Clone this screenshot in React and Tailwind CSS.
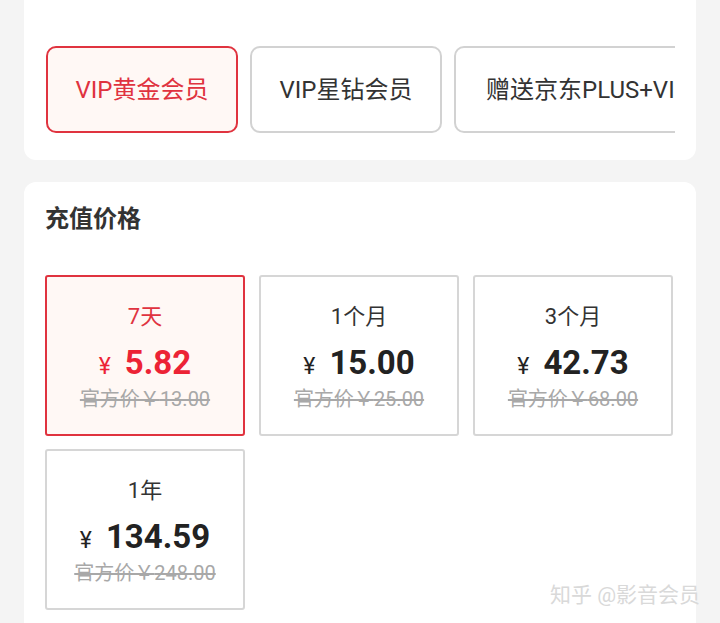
import React from "react";

const tabs = [
  { name: "VIP黄金会员", active: true },
  { name: "VIP星钻会员", active: false },
  { name: "赠送京东PLUS+VIP年卡", active: false },
];

const plans = [
  { label: "7天", price: "5.82", official: "13.00", active: true },
  { label: "1个月", price: "15.00", official: "25.00", active: false },
  { label: "3个月", price: "42.73", official: "68.00", active: false },
  { label: "1年", price: "134.59", official: "248.00", active: false },
];

export default function App() {
  return (
    <div
      className="relative h-[623px] w-[720px] overflow-hidden bg-[#f4f4f4]"
      style={{ fontFamily: "Roboto, 'Noto Sans CJK SC', sans-serif" }}
    >
      {/* 充值类型 */}
      <div className="mx-[24px] -mt-[25px] rounded-[12px] bg-white px-[22px] pb-[27px]">
        <h2 className="text-[24px] font-bold leading-[28px] text-[#333]">充值类型</h2>
        <div className="mr-[-1px] mt-[43px] flex gap-[12px] overflow-hidden">
          {tabs.map((t, i) => (
            <div
              key={t.name}
              className={`flex h-[87px] shrink-0 items-center justify-center whitespace-nowrap rounded-[10px] border-2 px-[30px] text-[24px] ${
                i < 2 ? "w-[192px]" : ""
              } ${
                t.active
                  ? "border-[#e0333f] bg-[#fff8f5] text-[#e0333f]"
                  : "border-[#d2d2d2] bg-white text-[#333]"
              }`}
            >
              {t.name}
            </div>
          ))}
        </div>
      </div>

      {/* 充值价格 */}
      <div className="mx-[24px] mt-[22px] h-[500px] rounded-t-[12px] bg-white px-[21px] pt-[22px]">
        <h2 className="text-[24px] font-bold leading-[30px] text-[#333]">充值价格</h2>
        <div className="mt-[41px] grid grid-cols-[200px_200px_200px] gap-x-[14px] gap-y-[13px]">
          {plans.map((p) => (
            <div
              key={p.label}
              className={`flex h-[161px] flex-col items-center rounded-[3px] border-2 pt-[26px] ${
                p.active ? "border-[#e0333f] bg-[#fff8f5]" : "border-[#d6d6d6] bg-white"
              }`}
            >
              <div
                className={`text-[22px] leading-[28px] ${p.active ? "text-[#e0333f]" : "text-[#333]"}`}
              >
                {p.label}
              </div>
              <div
                className={`mt-[12px] flex items-baseline gap-[14px] leading-[40px] ${
                  p.active ? "text-[#ec2335]" : "text-[#222]"
                }`}
              >
                <span className="text-[23px]">¥</span>
                <span className="text-[33px] font-bold">{p.price}</span>
              </div>
              <div className="text-[20px] leading-[24px] text-[#a8a8a8] line-through">
                官方价￥{p.official}
              </div>
            </div>
          ))}
        </div>
      </div>

      <div className="absolute bottom-[16px] right-[20px] text-[21px] leading-[24px] text-[#d9d9d9]">
        知乎 @影音会员
      </div>
    </div>
  );
}
